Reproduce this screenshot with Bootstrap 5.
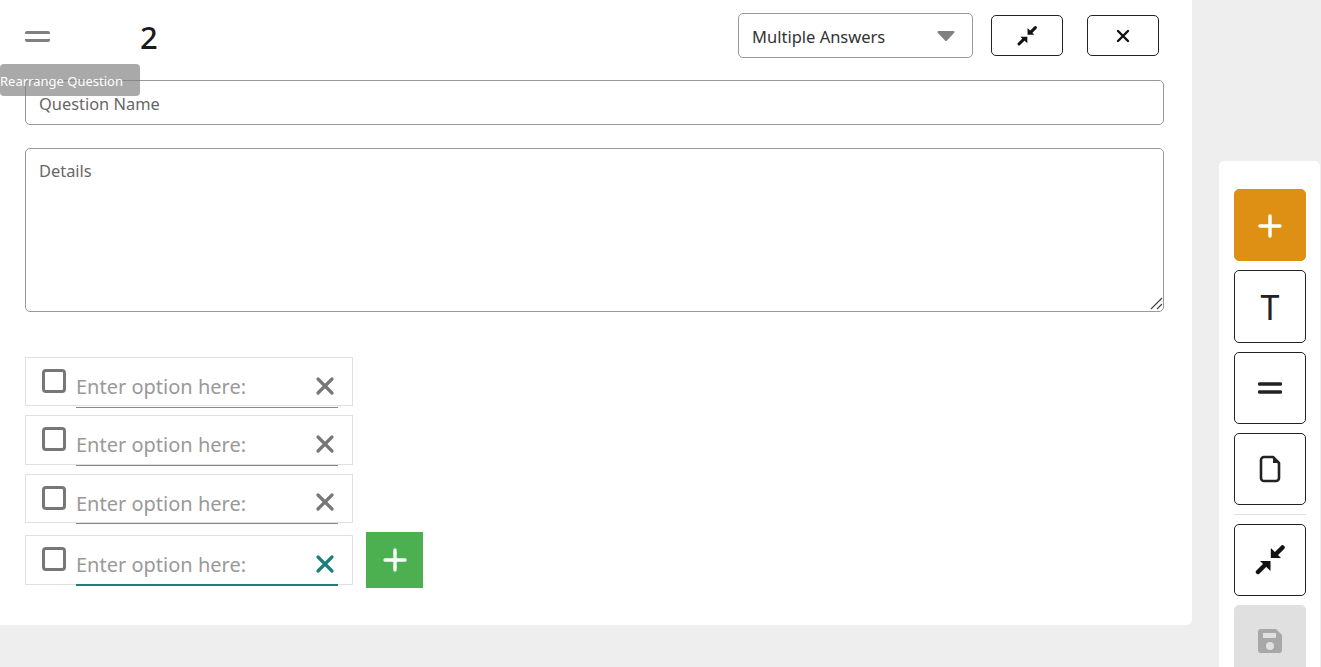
<!DOCTYPE html>
<html lang="en">
<head>
<meta charset="utf-8">
<title>Question editor</title>
<link rel="stylesheet" href="https://cdn.jsdelivr.net/npm/bootstrap@5.3.0/dist/css/bootstrap.min.css">
<style>
html,body{height:667px;overflow:hidden}
body{background:#eee;font-family:"Noto Sans",sans-serif;color:#212529}
.stage{height:667px;overflow:hidden}
.editor{width:1192px;height:625px;background:#fff;border-bottom-right-radius:5px;padding:13px 28px 0 25px;position:relative;flex:none}
.topbar{height:45px}
.drag-handle{width:25px;height:11px;border-top:3.5px solid #808080;border-bottom:3.5px solid #808080;border-radius:2px;margin-top:2px;flex:none}
.q-number{font-size:31px;line-height:45px;margin-left:90px;margin-top:3px;color:#1a1a1a;font-weight:500}
.type-select{width:235px;height:45px;font-size:16.5px;color:#333;border:1px solid #999;border-radius:5px;padding:3px 13px 0;box-shadow:none;
 background-image:url("data:image/svg+xml,%3Csvg xmlns='http://www.w3.org/2000/svg' viewBox='0 0 18 10'%3E%3Cpath d='M1.5 1h15L9 9z' fill='%23808080' stroke='%23808080' stroke-width='2' stroke-linejoin='round'/%3E%3C/svg%3E");
 background-size:18px 10px;background-position:right 17px center}
.tool-small{width:72px;height:41px;border:1px solid #222;border-radius:5px;background:#fff;padding:0;display:flex;align-items:center;justify-content:center}
.btn-gap-a{margin-left:18px}.btn-gap-b{margin-left:24px}
.btn-end{margin-right:5px}
.tip-box{position:absolute;left:0;top:64px;width:140px;height:32px;background:rgba(128,128,128,.68);color:#fff;font-size:13px;line-height:34px;border-radius:4px;white-space:nowrap;z-index:2}
.q-field{border:1px solid #999;border-radius:5px;font-size:16.4px;color:#333;padding:0 13px;box-shadow:none}
.q-field::placeholder{color:#666;opacity:1}
.q-name{height:45px;margin-top:22px;width:1139px;padding-top:1px}
.q-details{height:164px;margin-top:23px;width:1139px;padding-top:10px;resize:vertical;line-height:24px;display:block}
.q-details::-webkit-resizer{background:url("data:image/svg+xml,%3Csvg xmlns='http://www.w3.org/2000/svg' width='14' height='14'%3E%3Cpath d='M13 1L2 12M13 7L8 12' stroke='%23444' stroke-width='1.2' fill='none'/%3E%3C/svg%3E") no-repeat right bottom}
.options{margin-top:45px}
.opt-row{width:328px;border:1px solid #e0e0e0;position:relative;padding-left:16px;display:flex;background:#fff}
.opt-1{height:49px;margin-bottom:9px}
.opt-2{height:50px;margin-bottom:9px}
.opt-3{height:49px;margin-bottom:12px}
.opt-4{height:50px}
.box-mark{width:24px;height:24px;border:3px solid #777;border-radius:4px;margin-top:11px;flex:none}
.opt-body{width:262px;margin-left:10px;height:50px;border-bottom:1px solid #888;display:flex;align-items:center;justify-content:space-between;padding-right:3px;margin-bottom:-2px}
.opt-text{border:0;outline:0;padding:0;background:transparent;width:220px;font-size:20px;height:34px;margin-top:8px;font-family:inherit}
.opt-text::placeholder{color:#999;opacity:1}
.opt-x{margin-top:6px;flex:none}
.opt-3 .opt-body{height:49px}
.opt-3 .opt-text{margin-top:9px}
.opt-3 .opt-x{margin-top:5px}
.opt-4 .opt-x{margin-top:8px}
.active-line{border-bottom:2px solid #1b7f7c}
.add-opt{width:57px;height:56px;background:#4caf50;border:0;border-radius:0;margin-left:13px;margin-top:-3px;padding:0 0 1px;display:flex;align-items:center;justify-content:center;flex:none}
.side-panel{width:101px;margin-left:27px;margin-top:161px;background:#fff;border-radius:5px 5px 0 0;padding:28px 14px 0 15px;flex:none;height:520px}
.tool-big{width:72px;height:72px;border:1px solid #222;border-radius:5px;background:#fff;padding:0;display:flex;align-items:center;justify-content:center;margin-bottom:9px;font-size:34px;line-height:1;color:#222}
.tool-add{background:#de9015;border-color:#de9015}
.tool-tall{height:73px;padding-top:1px}
.tool-save{background:#e0e0e0;border-color:#e0e0e0}
.side-rule{border:0;border-top:1px solid #e0e0e0;opacity:1;margin:0 0 9px}
.plus-icon{margin-top:2px}
</style>
</head>
<body>
<div class="stage d-flex">
  <main class="editor">
    <div class="topbar d-flex align-items-center">
      <span class="drag-handle"></span>
      <span class="q-number">2</span>
      <select class="form-select type-select ms-auto" aria-label="Question type"><option>Multiple Answers</option></select>
      <button class="tool-small btn-gap-a" type="button" aria-label="Collapse">
        <svg width="20" height="20" viewBox="0 0 30 30"><path d="M3 27l7-7" stroke="#111" stroke-width="4.500" stroke-linecap="round"/><path d="M5 16h10.500v10z" fill="#111"/><path d="M27.500 2.500l-7 7" stroke="#111" stroke-width="4.500" stroke-linecap="round"/><path d="M26 13H15.800V3z" fill="#111"/></svg>
      </button>
      <button class="tool-small btn-gap-b btn-end" type="button" aria-label="Close">
        <svg width="14" height="14" viewBox="0 0 14 14"><path d="M2 2l10 10M12 2L2 12" stroke="#111" stroke-width="2.400" stroke-linecap="round"/></svg>
      </button>
    </div>
    <div class="tip-box">Rearrange Question</div>
    <input class="form-control q-field q-name" placeholder="Question Name">
    <textarea class="form-control q-field q-details" placeholder="Details"></textarea>
    <div class="options">
      <div class="opt-row opt-1">
        <span class="box-mark"></span>
        <div class="opt-body"><input class="opt-text" placeholder="Enter option here:">
          <svg class="opt-x" width="20" height="20" viewBox="0 0 20 20"><path d="M3 3l14 14M17 3L3 17" stroke="#777" stroke-width="3.200" stroke-linecap="round"/></svg></div>
      </div>
      <div class="opt-row opt-2">
        <span class="box-mark"></span>
        <div class="opt-body"><input class="opt-text" placeholder="Enter option here:">
          <svg class="opt-x" width="20" height="20" viewBox="0 0 20 20"><path d="M3 3l14 14M17 3L3 17" stroke="#777" stroke-width="3.200" stroke-linecap="round"/></svg></div>
      </div>
      <div class="opt-row opt-3">
        <span class="box-mark"></span>
        <div class="opt-body"><input class="opt-text" placeholder="Enter option here:">
          <svg class="opt-x" width="20" height="20" viewBox="0 0 20 20"><path d="M3 3l14 14M17 3L3 17" stroke="#777" stroke-width="3.200" stroke-linecap="round"/></svg></div>
      </div>
      <div class="d-flex">
        <div class="opt-row opt-4">
          <span class="box-mark"></span>
          <div class="opt-body active-line"><input class="opt-text" placeholder="Enter option here:">
            <svg class="opt-x" width="20" height="20" viewBox="0 0 20 20"><path d="M3 3l14 14M17 3L3 17" stroke="#1b7f7c" stroke-width="3.200" stroke-linecap="round"/></svg></div>
        </div>
        <button class="add-opt" type="button" aria-label="Add option">
          <svg width="24" height="24" viewBox="0 0 24 24"><path d="M12 2v20M2 12h20" stroke="#fff" stroke-width="3.400" stroke-linecap="round"/></svg>
        </button>
      </div>
    </div>
  </main>
  <aside class="side-panel">
    <button class="tool-big tool-add" type="button" aria-label="Add">
      <svg class="plus-icon" width="24" height="24" viewBox="0 0 24 24"><path d="M12 2v20M2 12h20" stroke="#fff" stroke-width="3.400" stroke-linecap="round"/></svg>
    </button>
    <button class="tool-big tool-tall" type="button">T</button>
    <button class="tool-big" type="button" aria-label="Reorder">
      <svg width="24" height="12" viewBox="0 0 24 12"><path d="M1.500 2h21M1.500 10h21" stroke="#222" stroke-width="3.400" stroke-linecap="round"/></svg>
    </button>
    <button class="tool-big" type="button" aria-label="Page">
      <svg width="22" height="28" viewBox="0 0 22 28"><path d="M5 2h9l6 6v15a3 3 0 0 1-3 3H5a3 3 0 0 1-3-3V5a3 3 0 0 1 3-3z" fill="none" stroke="#222" stroke-width="2.600" stroke-linejoin="round"/><path d="M14 2v6h6z" fill="#222"/></svg>
    </button>
    <hr class="side-rule">
    <button class="tool-big" type="button" aria-label="Collapse all">
      <svg width="30" height="30" viewBox="0 0 30 30"><path d="M3 27l7-7" stroke="#111" stroke-width="4.500" stroke-linecap="round"/><path d="M5 16h10.500v10z" fill="#111"/><path d="M27.500 2.500l-7 7" stroke="#111" stroke-width="4.500" stroke-linecap="round"/><path d="M26 13H15.800V3z" fill="#111"/></svg>
    </button>
    <button class="tool-big tool-save" type="button" aria-label="Save">
      <svg width="26" height="26" viewBox="0 0 26 26"><path fill-rule="evenodd" d="M4 1h15l6 6v15a3 3 0 0 1-3 3H4a3 3 0 0 1-3-3V4a3 3 0 0 1 3-3zm2 4v5h13V5zm7 9a4 4 0 1 0 0 8 4 4 0 0 0 0-8z" fill="#a8a8a8"/></svg>
    </button>
  </aside>
</div>
<script src="https://cdn.jsdelivr.net/npm/bootstrap@5.3.0/dist/js/bootstrap.bundle.min.js"></script>
</body>
</html>
